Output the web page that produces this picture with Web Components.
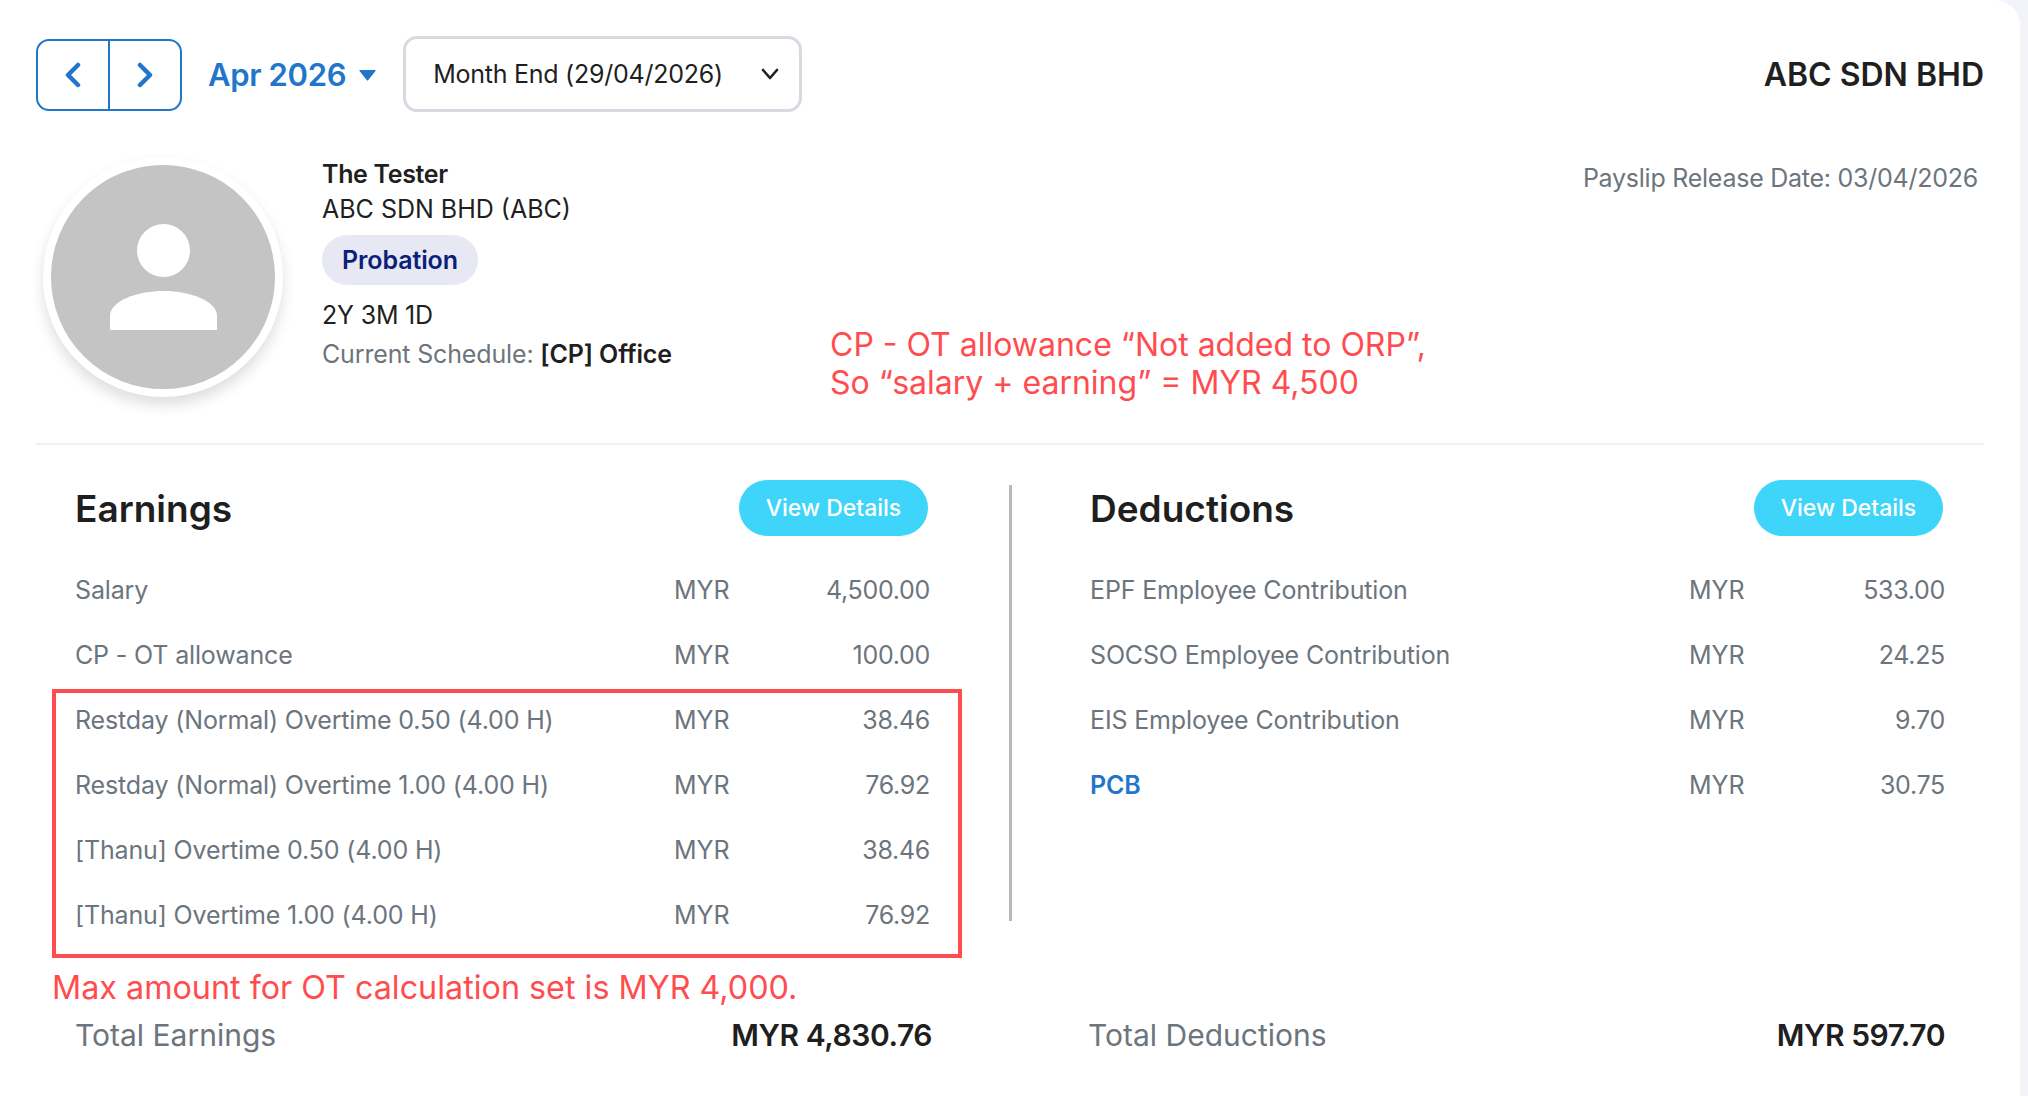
<!DOCTYPE html>
<html>
<head>
<meta charset="utf-8">
<title>Payslip</title>
<style>
  html, body { margin: 0; background: #fff; }
  body { font-family: Inter, "Noto Sans", sans-serif; width: 2028px; height: 1096px; overflow: hidden; }
</style>
</head>
<body>
<payslip-card>
  <month-bar slot="top" month="Apr 2026" period="Month End (29/04/2026)" company="ABC SDN BHD"></month-bar>
  <employee-info slot="top" name="The Tester" org="ABC SDN BHD (ABC)" status="Probation" tenure="2Y 3M 1D" schedule="[CP] Office" released="03/04/2026">
    <red-note style="white-space:nowrap">CP - OT allowance “Not added to ORP”,<br>So “salary + earning” = MYR 4,500</red-note>
  </employee-info>

  <pay-section slot="left" heading="Earnings" total-label="Total Earnings" total="MYR 4,830.76" note="Max amount for OT calculation set is MYR 4,000.">
    <pay-row label="Salary" amount="4,500.00"></pay-row>
    <pay-row label="CP - OT allowance" amount="100.00"></pay-row>
    <pay-row slot="boxed" label="Restday (Normal) Overtime 0.50 (4.00 H)" amount="38.46"></pay-row>
    <pay-row slot="boxed" label="Restday (Normal) Overtime 1.00 (4.00 H)" amount="76.92"></pay-row>
    <pay-row slot="boxed" label="[Thanu] Overtime 0.50 (4.00 H)" amount="38.46"></pay-row>
    <pay-row slot="boxed" label="[Thanu] Overtime 1.00 (4.00 H)" amount="76.92"></pay-row>
  </pay-section>

  <pay-section slot="right" class="right" heading="Deductions" total-label="Total Deductions" total="MYR 597.70">
    <pay-row label="EPF Employee Contribution" amount="533.00"></pay-row>
    <pay-row label="SOCSO Employee Contribution" amount="24.25"></pay-row>
    <pay-row label="EIS Employee Contribution" amount="9.70"></pay-row>
    <pay-row label="PCB" amount="30.75" link></pay-row>
  </pay-section>
</payslip-card>

<script>
class PayslipCard extends HTMLElement {
  connectedCallback() {
    this.attachShadow({ mode: "open" });
    this.shadowRoot.innerHTML = `
    <style>
      :host { display: block; width: 2028px; height: 1096px; background: #f2f4f9; }
      .card {
        width: 2020px; height: 1096px; box-sizing: border-box;
        background: #fff; border-radius: 0 26px 0 0;
        padding: 36px 36px 0 36px;
      }
      .rule { height: 2px; background: #f0f1f3; width: 1948px; }
      .cols { display: grid; grid-template-columns: 973px 3px 1fr; margin-top: 35px; }
      .divider { background: #b8b8b8; height: 436px; margin-top: 5px; }
    </style>
    <div class="card">
      <slot name="top"></slot>
      <div class="rule"></div>
      <div class="cols">
        <slot name="left"></slot>
        <div class="divider"></div>
        <slot name="right"></slot>
      </div>
    </div>`;
  }
}

class MonthBar extends HTMLElement {
  connectedCallback() {
    this.attachShadow({ mode: "open" });
    this.shadowRoot.innerHTML = `
    <style>
      :host { display: flex; align-items: center; height: 76px; color: #1f1f1f; }
      .pager {
        display: flex; width: 146px; height: 72px; box-sizing: border-box;
        border: 2px solid #2176c9; border-radius: 13px; margin-top: 2px;
      }
      .pager div { flex: 1; display: flex; align-items: center; justify-content: center; }
      .pager div + div { border-left: 2px solid #2176c9; }
      .month { color: #2176c9; font-size: 31px; font-weight: 600; letter-spacing: -.35px; margin-left: 26px; white-space: nowrap; }
      .caret { margin-left: 13px; margin-top: 3px; }
      .period {
        display: flex; align-items: center; justify-content: space-between;
        width: 399px; height: 76px; box-sizing: border-box; margin-left: 27px;
        border: 3px solid #d5dbe0; border-radius: 14px; padding: 0 20px 0 27px;
        font-size: 25px; letter-spacing: -.25px; white-space: nowrap;
      }
      .company { margin-left: auto; font-size: 32px; font-weight: 600; white-space: nowrap; }
    </style>
    <div class="pager">
      <div><svg width="18" height="26" viewBox="0 0 18 26" fill="none" stroke="#2176c9" stroke-width="4.500" stroke-linecap="round" stroke-linejoin="round"><path d="M14 3 4 13l10 10"/></svg></div>
      <div><svg width="18" height="26" viewBox="0 0 18 26" fill="none" stroke="#2176c9" stroke-width="4.500" stroke-linecap="round" stroke-linejoin="round"><path d="M4 3l10 10L4 23"/></svg></div>
    </div>
    <div class="month">${this.getAttribute("month")}</div>
    <svg class="caret" width="17" height="11" viewBox="0 0 17 11"><path d="M1 0h15q1 0 .500 1L9.300 10q-.800 1-1.600 0L.500 1Q0 0 1 0z" fill="#2176c9"/></svg>
    <div class="period">
      <span>${this.getAttribute("period")}</span>
      <svg width="18" height="12" viewBox="0 0 18 12" fill="none" stroke="#1f1f1f" stroke-width="2.600" stroke-linecap="round" stroke-linejoin="round"><path d="M2 2l7 8 7-8"/></svg>
    </div>
    <div class="company">${this.getAttribute("company")}</div>`;
  }
}

class EmployeeInfo extends HTMLElement {
  connectedCallback() {
    this.attachShadow({ mode: "open" });
    this.shadowRoot.innerHTML = `
    <style>
      :host { display: flex; height: 331px; box-sizing: border-box; position: relative; color: #1f1f1f; font-size: 25px; }
      .avatar {
        width: 240px; height: 240px; box-sizing: border-box; margin: 45px 0 0 7px; flex: none;
        border-radius: 50%; border: 8px solid #fff; background: #c4c4c4;
        box-shadow: 0 8px 14px rgba(0,0,0,.13); display: flex; align-items: center; justify-content: center;
      }
      .details { margin: 45px 0 0 39px; display: flex; flex-direction: column; align-items: flex-start; }
      .name { font-weight: 600; line-height: 35px; letter-spacing: -.35px; }
      .org { line-height: 35px; }
      .pill {
        margin-top: 8px; height: 50px; line-height: 50px; padding: 0 20px;
        background: #e8e8f5; color: #0a1f7a; border-radius: 25px; font-weight: 600; letter-spacing: -.1px;
      }
      .tenure { margin-top: 12px; line-height: 36px; letter-spacing: -.2px; }
      .schedule { margin-top: 3px; line-height: 36px; color: #6c757d; letter-spacing: -.15px; }
      .schedule b { color: #1f1f1f; font-weight: 600; }
      .released { margin: 48px 6px 0 auto; color: #6c757d; line-height: 36px; letter-spacing: -.25px; }
      .note { position: absolute; left: 794px; top: 214px; }
    </style>
    <div class="avatar">
      <svg width="107" height="106" viewBox="0 0 107 106" fill="#fff"><circle cx="53.500" cy="26.500" r="26.500"/><path d="M0 106V92C0 77 27 67 53.500 67S107 77 107 92V106z"/></svg>
    </div>
    <div class="details">
      <div class="name">${this.getAttribute("name")}</div>
      <div class="org">${this.getAttribute("org")}</div>
      <div class="pill">${this.getAttribute("status")}</div>
      <div class="tenure">${this.getAttribute("tenure")}</div>
      <div class="schedule">Current Schedule: <b>${this.getAttribute("schedule")}</b></div>
    </div>
    <div class="released">Payslip Release Date: ${this.getAttribute("released")}</div>
    <div class="note"><slot></slot></div>`;
  }
}

class RedNote extends HTMLElement {
  connectedCallback() {
    this.attachShadow({ mode: "open" });
    this.shadowRoot.innerHTML = `
    <style>
      :host { display: block; color: #ff4d4f; font-family: Inter, sans-serif; font-size: 32px; line-height: 38px; }
    </style>
    <slot></slot>`;
  }
}

class PaySection extends HTMLElement {
  connectedCallback() {
    const note = this.getAttribute("note");
    this.attachShadow({ mode: "open" });
    this.shadowRoot.innerHTML = `
    <style>
      :host { display: block; padding-left: 39px; color: #1f1f1f; }
      :host(.right) { padding-left: 78px; }
      :host(.right) .total { margin-left: -2px; width: 857px; }
      .head { display: flex; align-items: center; justify-content: space-between; width: 853px; height: 56px; }
      h2 { margin: 0; font-size: 37px; font-weight: 600; }
      button {
        border: 0; height: 56px; width: 189px; border-radius: 28px; background: #3fd5fb;
        color: #fff; font: 500 23px Inter, sans-serif; padding: 0;
      }
      .rows { margin-top: 21px; width: 855px; height: 390px; }
      .boxed { position: relative; }
      .boxed::after {
        content: ""; position: absolute; left: -23px; right: -32px; top: 2px; bottom: -11px;
        border: 4px solid #ff4d4f;
      }
      .foot { height: 66px; margin-left: -23px; padding-top: 17px; box-sizing: border-box; }
      .total { display: flex; justify-content: space-between; align-items: center; width: 857px; height: 44px; font-size: 30px; }
      .total span { color: #6c757d; }
      .total b { font-weight: 600; letter-spacing: -.45px; }
    </style>
    <div class="head"><h2>${this.getAttribute("heading")}</h2><button>View Details</button></div>
    <div class="rows">
      <slot></slot>
      ${note ? '<div class="boxed"><slot name="boxed"></slot></div>' : ""}
    </div>
    <div class="foot">${note ? `<red-note style="font-size:32.300px;line-height:48px;white-space:nowrap">${note}</red-note>` : ""}</div>
    <div class="total"><span>${this.getAttribute("total-label")}</span><b>${this.getAttribute("total")}</b></div>`;
  }
}

class PayRow extends HTMLElement {
  connectedCallback() {
    this.attachShadow({ mode: "open" });
    this.shadowRoot.innerHTML = `
    <style>
      :host { display: grid; grid-template-columns: 599px 60px 1fr; align-items: center; height: 65px; font-size: 25px; color: #6c757d; }
      .label { letter-spacing: -.15px; white-space: nowrap; }
      .link { color: #2176c9; font-weight: 600; }
      .amt { text-align: right; letter-spacing: -.3px; }
    </style>
    <span class="label ${this.hasAttribute("link") ? "link" : ""}">${this.getAttribute("label")}</span>
    <span>MYR</span>
    <span class="amt">${this.getAttribute("amount")}</span>`;
  }
}

customElements.define("payslip-card", PayslipCard);
customElements.define("month-bar", MonthBar);
customElements.define("employee-info", EmployeeInfo);
customElements.define("red-note", RedNote);
customElements.define("pay-section", PaySection);
customElements.define("pay-row", PayRow);
</script>
</body>
</html>
